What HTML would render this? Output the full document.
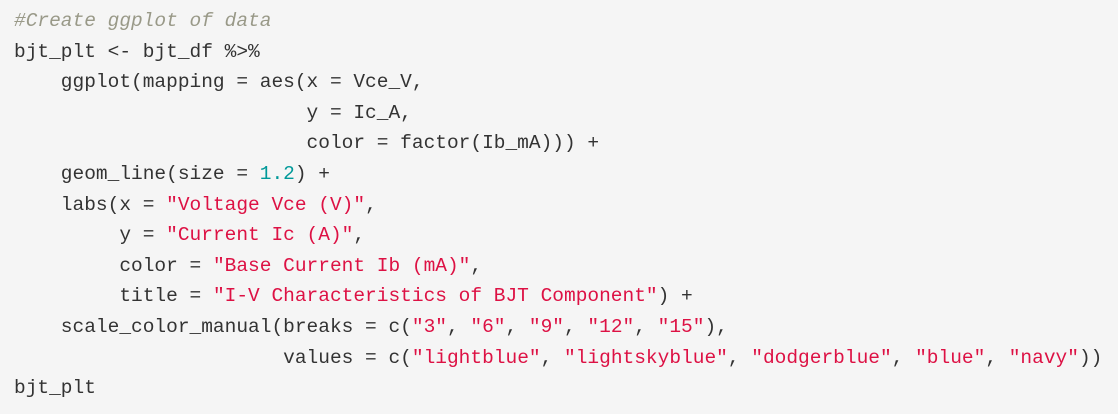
<!DOCTYPE html>
<html><head><meta charset="utf-8"><style>
html,body{margin:0;padding:0;background:#f5f5f5;width:1118px;height:414px;overflow:hidden}
pre{margin:0;position:absolute;left:14px;top:6px;font-family:"Liberation Mono",monospace;font-size:19.5px;line-height:30.6px;color:#333}
.c{color:#998;font-style:italic}.n{color:#099}.s{color:#d14}
</style></head><body><pre><span class="c">#Create ggplot of data</span>
bjt_plt &lt;- bjt_df %&gt;%
    ggplot(mapping = aes(x = Vce_V,
                         y = Ic_A,
                         color = factor(Ib_mA))) +
    geom_line(size = <span class="n">1.2</span>) +
    labs(x = <span class="s">"Voltage Vce (V)"</span>,
         y = <span class="s">"Current Ic (A)"</span>,
         color = <span class="s">"Base Current Ib (mA)"</span>,
         title = <span class="s">"I-V Characteristics of BJT Component"</span>) +
    scale_color_manual(breaks = c(<span class="s">"3"</span>, <span class="s">"6"</span>, <span class="s">"9"</span>, <span class="s">"12"</span>, <span class="s">"15"</span>),
                       values = c(<span class="s">"lightblue"</span>, <span class="s">"lightskyblue"</span>, <span class="s">"dodgerblue"</span>, <span class="s">"blue"</span>, <span class="s">"navy"</span>))
bjt_plt</pre></body></html>
